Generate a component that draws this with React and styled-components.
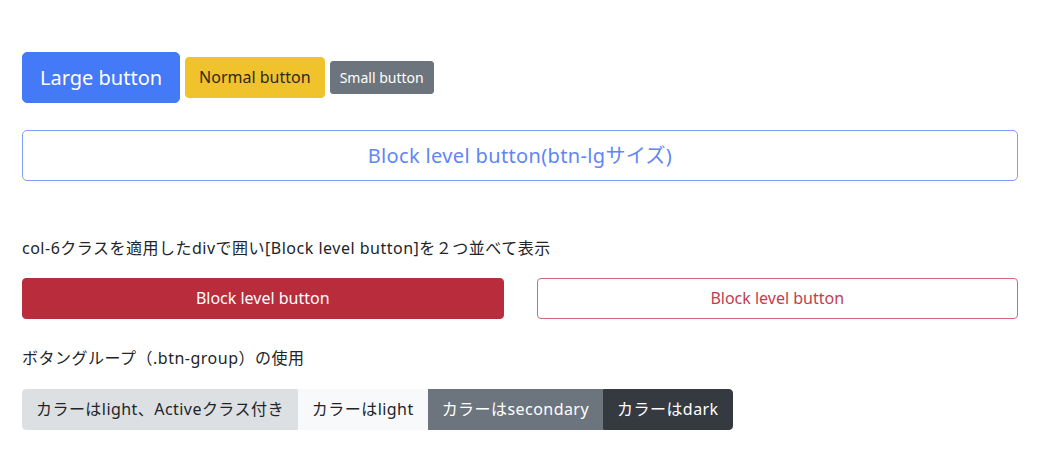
import React from "react";
import styled, { createGlobalStyle, css } from "styled-components";

const GlobalStyle = createGlobalStyle`
  body {
    margin: 0;
    background: #fff;
    font-family: "Noto Sans", "Noto Sans CJK JP", sans-serif;
    color: #212529;
  }
`;

const variants = {
  primary: css`
    background: #4479f7;
    border-color: #4479f7;
    color: #fff;
  `,
  warning: css`
    background: #f0c22b;
    border-color: #f0c22b;
    color: #2b2a1f;
  `,
  secondary: css`
    background: #6c757d;
    border-color: #6c757d;
    color: #fff;
  `,
  danger: css`
    background: #b82c3c;
    border-color: #b82c3c;
    color: #fff;
  `,
  outlinePrimary: css`
    background: #fff;
    border-color: #7f9ff6;
    color: #5f86f5;
  `,
  outlineDanger: css`
    background: #fff;
    border-color: #d66774;
    color: #c0404f;
  `,
  lightActive: css`
    background: #dde0e3;
    border-color: #dde0e3;
    color: #212529;
  `,
  light: css`
    background: #f8f9fa;
    border-color: #f8f9fa;
    color: #212529;
  `,
  dark: css`
    background: #343a40;
    border-color: #343a40;
    color: #fff;
  `,
};

const sizes = {
  lg: css`
    font-size: 20px;
    padding: 9px 17px;
    line-height: 31px;
    border-radius: 5px;
  `,
  md: css`
    font-size: 16px;
    padding: 7px 13px;
    line-height: 25px;
    border-radius: 4px;
  `,
  sm: css`
    font-size: 14px;
    padding: 5px 9px;
    line-height: 21px;
    border-radius: 3px;
  `,
};

const Button = styled.button`
  font-family: inherit;
  border: 1px solid transparent;
  cursor: pointer;
  text-align: center;
  white-space: nowrap;
  letter-spacing: ${(p) => p.spacing || 0}px;
  ${(p) => sizes[p.size || "md"]}
  ${(p) => variants[p.variant]}
  ${(p) =>
    p.block &&
    css`
      display: block;
      width: 100%;
    `}
`;

const Page = styled.div`
  padding: 52px 24px 20px 22px;
`;

const Row = styled.div`
  display: flex;
  align-items: center;
  gap: 5px;
`;

const BlockWrap = styled.div`
  margin-top: 27px;
`;

const Caption = styled.p`
  margin: ${(p) => p.top}px 0 0;
  font-size: 16px;
  line-height: 24px;
  letter-spacing: 0.5px;
`;

const Cols = styled.div`
  display: grid;
  grid-template-columns: 1fr 1fr;
  gap: 33px;
  margin-top: 18px;
`;

const Group = styled.div`
  display: inline-flex;
  margin-top: 19px;

  ${Button} {
    border-radius: 0;
    letter-spacing: 0.45px;
  }
  ${Button}:first-child {
    border-radius: 4px 0 0 4px;
  }
  ${Button}:last-child {
    border-radius: 0 4px 4px 0;
  }
`;

export default function App() {
  return (
    <>
      <GlobalStyle />
      <Page>
        <Row>
          <Button size="lg" variant="primary">Large button</Button>
          <Button variant="warning">Normal button</Button>
          <Button size="sm" variant="secondary">Small button</Button>
        </Row>
        <BlockWrap>
          <Button size="lg" variant="outlinePrimary" spacing={0.35} block>
            Block level button(btn-lgサイズ)
          </Button>
        </BlockWrap>
        <Caption top={55}>
          col-6クラスを適用したdivで囲い[Block level button]を２つ並べて表示
        </Caption>
        <Cols>
          <Button variant="danger" block>Block level button</Button>
          <Button variant="outlineDanger" block>Block level button</Button>
        </Cols>
        <Caption top={27}>ボタングループ（.btn-group）の使用</Caption>
        <Group>
          <Button variant="lightActive">カラーはlight、Activeクラス付き</Button>
          <Button variant="light">カラーはlight</Button>
          <Button variant="secondary">カラーはsecondary</Button>
          <Button variant="dark">カラーはdark</Button>
        </Group>
      </Page>
    </>
  );
}
